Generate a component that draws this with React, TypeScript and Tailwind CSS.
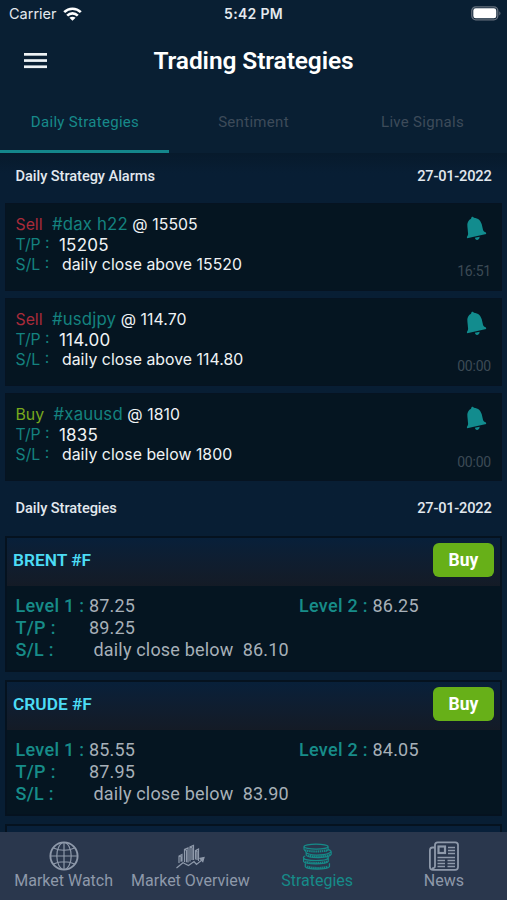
import type { ReactNode } from "react";

type Alarm = {
  side: "Sell" | "Buy";
  symbol: string;
  price: string;
  target: string;
  stop: string;
  time: string;
};

type Strategy = {
  name: string;
  level1: string;
  level2: string;
  target: string;
  stop: string;
};

const alarms: Alarm[] = [
  { side: "Sell", symbol: "#dax h22", price: "15505", target: "15205", stop: "daily close above 15520", time: "16:51" },
  { side: "Sell", symbol: "#usdjpy", price: "114.70", target: "114.00", stop: "daily close above 114.80", time: "00:00" },
  { side: "Buy", symbol: "#xauusd", price: "1810", target: "1835", stop: "daily close below 1800", time: "00:00" },
];

const strategies: Strategy[] = [
  { name: "BRENT #F", level1: "87.25", level2: "86.25", target: "89.25", stop: "86.10" },
  { name: "CRUDE #F", level1: "85.55", level2: "84.05", target: "87.95", stop: "83.90" },
];

const StatusBar = () => (
  <div className="grid h-[27px] grid-cols-3 items-center pl-[9px] pr-[6px] font-[Inter,sans-serif] text-[#e4e9ee]">
    <div className="flex items-center gap-[6px] text-[14.5px]">
      Carrier
      <svg width="19" height="14" viewBox="0 0 19 14" fill="none" stroke="#fff" strokeWidth="2.6">
        <path d="M1.2 5.2C5.8.6 13.2.6 17.8 5.2" />
        <path d="M4.2 8.6c3-3 7.6-3 10.6 0" />
        <path d="M9.5 13.8 6.4 10.8c1.7-1.5 4.5-1.5 6.2 0Z" fill="#fff" stroke="none" />
      </svg>
    </div>
    <div className="pr-[3px] text-center text-[14px] font-semibold tracking-[0.3px]">5:42 PM</div>
    <svg className="justify-self-end" width="30" height="15" viewBox="0 0 30 15">
      <rect x=".8" y=".8" width="26" height="13" rx="4" fill="none" stroke="#66717e" strokeWidth="1.3" />
      <rect x="2.3" y="2.3" width="23" height="10" rx="2.4" fill="#fff" />
      <path d="M28.3 5.2c1.6.8 1.6 3.5 0 4.2Z" fill="#66717e" />
    </svg>
  </div>
);

const Header = () => (
  <header className="grid h-[67px] grid-cols-[70px_1fr_70px] items-center">
    <svg className="ml-6" width="23" height="16" viewBox="0 0 23 16" fill="#eef2f5">
      <rect width="23" height="2.7" y="0" />
      <rect width="23" height="2.7" y="6.2" />
      <rect width="23" height="2.7" y="12.4" />
    </svg>
    <h1 className="pt-[2px] text-center text-[24.5px] font-semibold tracking-[-0.1px] text-white">Trading Strategies</h1>
  </header>
);

const Tabs = () => (
  <nav className="grid h-[59px] grid-cols-3 text-center text-[15px] leading-[56px] tracking-[0.3px] text-[#3d4b5a]">
    <div className="border-b-[3px] border-[#14868b] pl-px text-[#178a8a]">Daily Strategies</div>
    <div>Sentiment</div>
    <div>Live Signals</div>
  </nav>
);

const SectionTitle = (props: { children: ReactNode; className: string }) => (
  <div className={`flex items-center justify-between px-[15.5px] text-[14.6px] font-medium tracking-[-0.05px] text-[#e2e8ee] ${props.className}`}>
    <h2>{props.children}</h2>
    <span className="tracking-[-0.2px]">27-01-2022</span>
  </div>
);

const Bell = () => (
  <svg width="21" height="25" viewBox="0 0 21 25" fill="#128c8e">
    <path d="M5.5 1.2c.8-.9 2-.5 2.3.5 4.500.4 7 3 8 6.8l1.2 5.2c.4 1.400 1.400 2.200 3 2.900l.2 1.300L1.200 22.200l-.4-1.100c1.200-1.600 1.500-2.900 1.200-4.300L1.400 10.500C.9 7 2.200 4.200 5 2.700Z" />
    <path d="M8.900 21.800 13.600 20.700c.2 1.600-.8 2.800-2.300 3.200-1.200.2-2.300-.7-2.400-2.100Z" />
  </svg>
);

const AlarmCard = ({ alarm }: { alarm: Alarm }) => (
  <article className="flex h-[87.5px] justify-between border border-[#061321] bg-[#051521] pl-[9.5px] pr-[10px] pt-[9.8px] font-[Inter,sans-serif] text-[15.8px] leading-[20.3px]">
    <div className="whitespace-pre text-[#f0f3f5]">
      <p className="h-[21px]">
        <span className={alarm.side === "Sell" ? "text-[#a92b3a]" : "text-[#79a91d]"}>{alarm.side}</span>
        <span className="ml-[9.5px] text-[16.8px] tracking-[0.15px] text-[#14827f]">{alarm.symbol}</span>
        <span className="font-[430] tracking-[0.08px]"> @ {alarm.price}</span>
      </p>
      <p className="flex h-[20px]">
        <span className="w-[43.5px] text-[#14827f]">T/P :</span>
        <span className="text-[17px] font-[430] tracking-[0.2px]">{alarm.target}</span>
      </p>
      <p className="flex">
        <span className="w-[46.5px] text-[#14827f]">S/L :</span>
        <span className="font-[430] tracking-[0.04px]">{alarm.stop}</span>
      </p>
    </div>
    <div className="flex flex-col items-end font-[Roboto,sans-serif] text-[14px] tracking-[-0.2px] text-[#3c4a55]">
      <div className="mr-[4px] mt-[2px] h-[45.5px]">
        <Bell />
      </div>
      {alarm.time}
    </div>
  </article>
);

const Label = (props: { children: ReactNode }) => (
  <span className="font-medium tracking-[0.3px] text-[#178c89]">{props.children}</span>
);

const StrategyCard = ({ strategy }: { strategy: Strategy }) => (
  <article className="h-[136px] border-2 border-[#05121f] bg-[#051521]">
    <div className="flex h-[48px] items-start justify-between bg-linear-to-b from-[#08203a] to-[#141b26] pl-[6px] pr-[6px] pt-[5.3px] leading-[34px]">
      <h3 className="text-[17.3px] font-semibold text-[#4cdcf5]">{strategy.name}</h3>
      <div className="h-[34px] w-[61px] rounded-[6px] bg-[#67b018] text-center text-[17.5px] font-bold text-white">
        Buy
      </div>
    </div>
    <div className="grid grid-cols-[283.5px_1fr] whitespace-pre pl-[8.5px] pt-[9px] text-[18px] leading-[22px] tracking-[0.18px] text-[#a7b0b8]">
      <p className="flex">
        <span className="w-[73.5px]"><Label>Level 1 :</Label></span>
        {strategy.level1}
      </p>
      <p>
        <Label>Level 2 :</Label> {strategy.level2}
      </p>
      <p className="col-span-2 flex">
        <span className="w-[73.5px]"><Label>T/P :</Label></span>
        {strategy.target}
      </p>
      <p className="col-span-2 flex">
        <span className="w-[78px]"><Label>S/L :</Label></span>
        daily close below  {strategy.stop}
      </p>
    </div>
  </article>
);

const GlobeIcon = () => (
  <svg width="30" height="30" viewBox="0 0 30 30" fill="none" stroke="currentColor" strokeWidth="1.2">
    <circle cx="15" cy="15" r="13.6" strokeWidth="1.9" />
    <ellipse cx="15" cy="15" rx="7.2" ry="13.5" />
    <path d="M15 1.5v27M1.5 15h27M4.500 7c6 3 15 3 21 0M4.500 23c6-3 15-3 21 0" />
  </svg>
);

const OverviewIcon = () => (
  <svg width="30" height="30" viewBox="0 0 30 30" fill="none" stroke="currentColor" strokeWidth="1.2">
    <path d="M1.500 27 8 21.800l5.500 2.700 5.500-4 2.500 3 6-5" />
    <path d="M25 17.300 29 16.500 27.800 20.500Z" fill="currentColor" />
    <path d="M4 22v-7l3-1.500v7M4 15l2 .8v5M9.500 21V8.500l3.500-1.500v14.500M9.500 8.500l2 .8v12M15 20.500V6l3.500-1.500V19M15 6l2 .8V19M20.500 18.500V9.500l3-1.500v12M20.500 9.500l1.500.7V19" />
  </svg>
);

const CoinsIcon = () => (
  <svg width="30" height="30" viewBox="-.5 -1 32 31" fill="none" stroke="currentColor" strokeWidth="1.3">
    <ellipse cx="14.5" cy="4.5" rx="12.8" ry="2.6" />
    <path d="M1.700 4.500v3c.3 1 1 1.600 2 2M27.300 4.500v3c-.5 1-1.400 1.600-2.500 2M4 9.500c-.8 1 0 2 2 2.600 6 2.300 20 1.600 24-1.600 1-1 .3-2.200-2.800-2.800M4 10.500v3c2 3.700 25 3.700 26.600-.8v-3M3 14.500c-1.600.5-2.300 1.200-1.800 2.300 2 3.500 24 3.500 26.300 0v-1.300M1.200 17v3.300c2 3.500 24 3.500 26.300 0V17M3 22.500v3.300c2 3.500 23 3.500 25.800 0v-3.500" />
    <path strokeDasharray="1.5 .7" strokeWidth="2.300" d="M3 8.200c5 2 18 2 23 0M6 13.900c5 1.800 19 1.500 23.500-1M3 20.300c5 2.200 18 2.200 23.500 0M5 25.800c5 2 17 2 22 0" />
  </svg>
);

const NewsIcon = () => (
  <svg width="30" height="30" viewBox="0 0 30 30" fill="none" stroke="currentColor" strokeWidth="1.8">
    <path d="M6 25V4c0-1.600 1-2.700 2.700-2.700h17.600C28 1.300 29 2.400 29 4v22c0 1.700-1 2.800-2.700 2.800H4C2 28.800.9 27.700.9 26V9.500c0-1.800 1-3 2.700-3H6M6 25c0 2-2 2.500-3 2" />
    <rect x="9.5" y="5.5" width="6.5" height="6.5" strokeWidth="2.2" />
    <path strokeWidth="1.3" d="M19 6.500h7M19 9.500h7M19 12.500h7M8.500 16.500H26M8.500 19.500H16M18.500 19.500H26M8.500 22.500H16M18.500 22.500H26M8.500 25.500H16M18.500 25.500H26" />
  </svg>
);

const NavItem = (props: { icon: ReactNode; label: string; active?: boolean }) => (
  <div className={`flex flex-col items-center whitespace-nowrap pl-[0.5px] pt-[9px] ${props.active ? "text-[#168b89]" : "text-[#8e99aa]"}`}>
    {props.icon}
    <span className="text-[16px] leading-[20px]">{props.label}</span>
  </div>
);

export default function App() {
  return (
    <div className="flex h-[900px] w-[507px] flex-col overflow-hidden bg-[#081e34] font-[Roboto,sans-serif]">
      <div className="bg-[#091f33]">
        <StatusBar />
        <Header />
        <Tabs />
      </div>
      <main className="min-h-0 flex-1 overflow-hidden bg-linear-to-b from-[#071a2c] to-[#081e34] to-[20px]">
        <SectionTitle className="h-[50px] pb-[3px]">Daily Strategy Alarms</SectionTitle>
        <div className="flex flex-col gap-[7.7px] px-[5px]">
          {alarms.map((alarm) => (
            <AlarmCard key={alarm.symbol} alarm={alarm} />
          ))}
        </div>
        <SectionTitle className="h-[55.2px]">Daily Strategies</SectionTitle>
        <div className="flex flex-col gap-2 px-[5px]">
          {strategies.map((strategy) => (
            <StrategyCard key={strategy.name} strategy={strategy} />
          ))}
          <div className="h-12 border-2 border-[#05121f] bg-[#08203a]" />
        </div>
      </main>
      <footer className="grid h-[68px] grid-cols-4 bg-[#2a374d]">
        <NavItem icon={<GlobeIcon />} label="Market Watch" />
        <NavItem icon={<OverviewIcon />} label="Market Overview" />
        <NavItem icon={<CoinsIcon />} label="Strategies" active />
        <NavItem icon={<NewsIcon />} label="News" />
      </footer>
    </div>
  );
}
